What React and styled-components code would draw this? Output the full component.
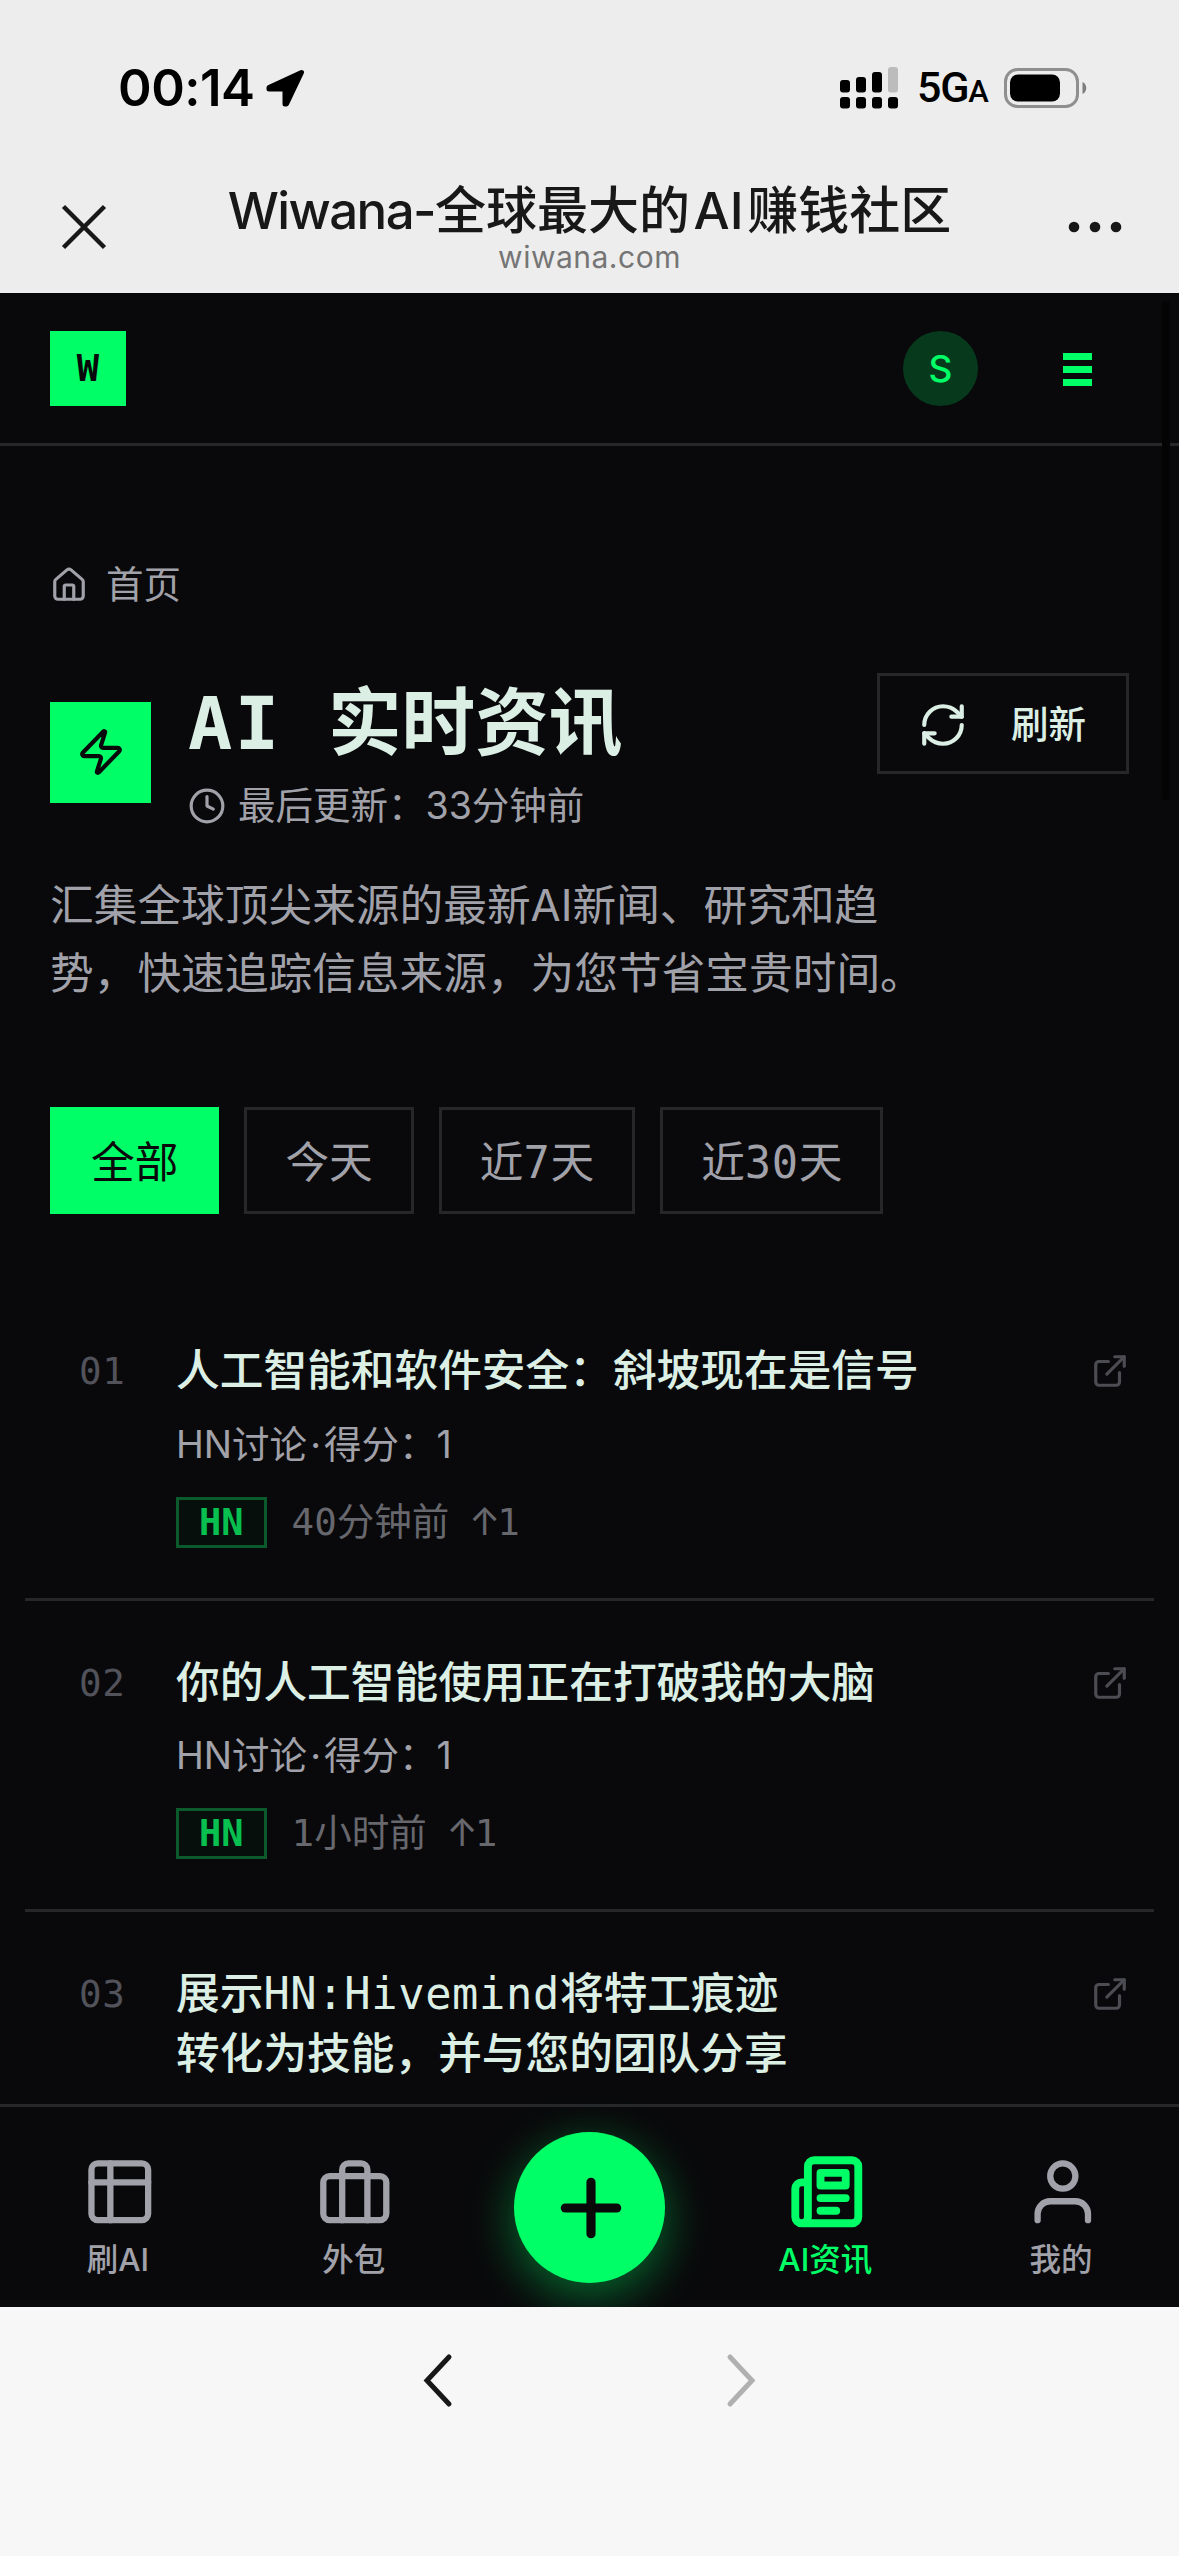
import React from "react";
import styled, { createGlobalStyle } from "styled-components";
import { House, Zap, Clock, RefreshCw, ExternalLink, Plus } from "lucide-react";

const sans = `Inter, "Noto Sans CJK SC", sans-serif`;
const mono = `"DejaVu Sans Mono", "Noto Sans CJK SC", monospace`;
const green = "#00ff66";
const line = "#27272a";
const muted = "#a1a1aa";

const GlobalStyle = createGlobalStyle`
  * {
    box-sizing: border-box;
  }
  body {
    margin: 0;
    background: #f7f7f7;
    font-family: ${sans};
  }
  svg {
    display: block;
    flex-shrink: 0;
  }
`;

const Screen = styled.div`
  width: 1179px;
  height: 2556px;
  display: flex;
  flex-direction: column;
  overflow: hidden;
  background: #f7f7f7;
`;

/* ---------- phone chrome ---------- */

const Chrome = styled.div`
  height: 293px;
  background: #ededed;
  color: #181818;
`;

const StatusBar = styled.div`
  height: 176px;
  padding: 0 92px 0 118px;
  display: flex;
  align-items: center;
  justify-content: space-between;
  color: #000;
`;

const StatusGroup = styled.div`
  display: flex;
  align-items: center;
`;

const Time = styled.div`
  width: 146px;
  font-size: 51px;
  font-weight: 600;
  line-height: 60px;
  letter-spacing: -0.5px;
`;

const Network = styled.div`
  width: 106px;
  padding: 3px 0 0 19px;
  font-family: Roboto, sans-serif;
  font-size: 43px;
  font-weight: 500;
  line-height: 50px;
  letter-spacing: -1.3px;
  white-space: nowrap;

  small {
    font-size: 31px;
  }
`;

const TitleBar = styled.div`
  height: 102px;
  padding: 0 57px;
  display: flex;
  align-items: center;
  justify-content: space-between;
`;

const PageName = styled.div`
  display: flex;
  flex-direction: column;
  align-items: center;
  white-space: nowrap;
`;

const PageTitle = styled.div`
  font-size: 51px;
  font-weight: 500;
  line-height: 62px;
  word-spacing: -10px;

  span {
    letter-spacing: -1.6px;
  }
`;

const PageHost = styled.div`
  margin-top: -2px;
  font-size: 30px;
  line-height: 34px;
  letter-spacing: 0.5px;
  color: #757575;
`;

const BrowserBar = styled.div`
  height: 249px;
  padding: 42px 418px 0;
  display: flex;
  justify-content: space-between;
  align-items: flex-start;
`;

/* ---------- web page ---------- */

const Page = styled.div`
  position: relative;
  height: 2014px;
  display: flex;
  flex-direction: column;
  overflow: hidden;
  background: #09090b;
  color: #dcefe5;
`;

const ScrollThumb = styled.div`
  position: absolute;
  top: 8px;
  right: 9px;
  width: 8px;
  height: 499px;
  border-radius: 4px;
  background: #040405;
`;

const Header = styled.header`
  height: 153px;
  flex-shrink: 0;
  padding: 0 87px 0 50px;
  display: flex;
  align-items: center;
  border-bottom: 3px solid ${line};
`;

const Logo = styled.div`
  width: 76px;
  height: 75px;
  margin-right: auto;
  background: ${green};
  color: #09090b;
  font: bold 37px/75px ${mono};
  text-align: center;
`;

const Avatar = styled.div`
  width: 75px;
  height: 75px;
  margin-right: 85px;
  border-radius: 50%;
  background: #07391d;
  color: ${green};
  font-size: 37px;
  font-weight: 500;
  line-height: 75px;
  text-align: center;
`;

const Burger = styled.div`
  display: flex;
  flex-direction: column;
  gap: 6px;
  padding-top: 3px;

  span {
    width: 29px;
    height: 7px;
    background: ${green};
  }
`;

const Main = styled.main`
  flex: 1;
  min-height: 0;
  overflow: hidden;
  padding: 112px 50px 0;
`;

const Breadcrumb = styled.div`
  display: flex;
  align-items: center;
  gap: 18px;
  margin-bottom: 61px;
  color: ${muted};
  font-size: 37.5px;
  line-height: 54px;
`;

const Hero = styled.div`
  display: flex;
  justify-content: space-between;
  align-items: flex-start;
`;

const HeroLeft = styled.div`
  display: flex;
  align-items: center;
  gap: 37px;
`;

const HeroIcon = styled.div`
  width: 101px;
  height: 101px;
  margin-top: -2px;
  display: flex;
  align-items: center;
  justify-content: center;
  background: ${green};
  color: #09090b;
`;

const Heading = styled.h1`
  margin: 0;
  padding: 2px 0 7px;
  font: bold 73.6px/97px ${mono};
  white-space: nowrap;
`;

/* latin glyphs sit slightly wider than the CJK run around them */
const Latin = styled.span`
  letter-spacing: ${(props) => props.$track || "0.015em"};
`;

const Updated = styled.div`
  display: flex;
  align-items: center;
  gap: 12px;
  color: ${muted};
  font-size: 37.5px;
  line-height: 54px;
`;

const RefreshButton = styled.button`
  width: 252px;
  height: 101px;
  padding: 2px 40px 0 38px;
  display: flex;
  align-items: center;
  justify-content: space-between;
  border: 3px solid ${line};
  background: transparent;
  color: #dcefe5;
  font: 500 37.5px/54px ${sans};
`;

const Intro = styled.p`
  max-width: 900px;
  margin: 0;
  padding: 38.5px 0 98.5px;
  color: ${muted};
  font-size: 43.7px;
  line-height: 68.7px;
`;

const Filters = styled.div`
  display: flex;
  gap: 25px;
  margin-bottom: 75px;
`;

const Filter = styled.button`
  height: 107px;
  padding: 4px 38px 0;
  border: 3px solid ${(props) => (props.$active ? green : line)};
  background: ${(props) => (props.$active ? green : "transparent")};
  color: ${(props) => (props.$active ? "#09090b" : muted)};
  font: 43.7px/60px ${mono};
`;

const List = styled.div`
  margin: 0 -25px;
`;

const Item = styled.article`
  display: flex;
  align-items: flex-start;
  padding: 52px 25px 50px 54px;
  border-bottom: 3px solid ${line};
`;

const Index = styled.div`
  width: 97px;
  color: #52525b;
  font: 37.5px/60px ${mono};
  letter-spacing: 0.6px;
`;

const ItemBody = styled.div`
  flex: 1;
`;

const ItemTitle = styled.h2`
  width: 780px;
  margin: 0 0 12px;
  font: 500 43.7px/60.3px ${mono};
`;

const ItemText = styled.div`
  margin-bottom: 22px;
  color: ${muted};
  font-size: 37.5px;
  line-height: 61px;
`;

const Dot = styled.span`
  padding: 0 3px;
`;

const Meta = styled.div`
  display: flex;
  align-items: center;
  gap: 25px;
  color: #67676e;
  font: 37.5px/51px ${mono};
`;

const Votes = styled.span`
  display: flex;

  i {
    width: 25px;
    margin-left: -2px;
    font: 37.5px/49px Inter, sans-serif;
    display: flex;
    justify-content: center;
  }
`;

const Badge = styled.span`
  height: 51px;
  padding: 0 20px;
  border: 3px solid #0b5a2b;
  background: #060f0b;
  color: #08c050;
  font: bold 37px/45px ${mono};
`;

const OpenIcon = styled(ExternalLink)`
  margin-top: 11px;
  color: #4c4c53;
`;

const TabBar = styled.nav`
  height: 203px;
  flex-shrink: 0;
  display: grid;
  grid-template-columns: repeat(5, 1fr);
  border-top: 3px solid ${line};
  background: #09090b;
`;

const Tab = styled.div`
  display: flex;
  flex-direction: column;
  align-items: center;
  gap: 9px;
  padding-top: 47px;
  color: ${(props) => (props.$active ? green : muted)};
  font-size: 31.5px;
  font-weight: 500;
  line-height: 42px;

  svg {
    margin-left: 3px;
  }
`;

const AddButton = styled.div`
  width: 151px;
  height: 151px;
  margin: 25px 0 0 1px;
  padding-left: 2px;
  justify-self: center;
  display: flex;
  align-items: center;
  justify-content: center;
  border-radius: 50%;
  background: ${green};
  color: #09090b;
  box-shadow: 0 13px 47px rgba(0, 255, 102, 0.4);
`;

const LocationArrow = () => (
  <svg width="42" height="42" viewBox="0 0 42 42">
    <path d="M37.500 5.500 5 20.500v1.500h16v15h1.500z" fill="#000" stroke="#000" strokeWidth="5" strokeLinejoin="round" />
  </svg>
);

const Signal = () => (
  <svg width="58" height="42" viewBox="0 0 58 42">
    <rect x="0" y="13" width="10" height="12.500" rx="3" />
    <rect x="16" y="10" width="10" height="15.500" rx="3" />
    <rect x="32" y="5" width="10" height="20.500" rx="3" />
    <rect x="48" y="0" width="10" height="25.500" rx="3" fill="#bcbcbc" />
    {[0, 16, 32, 48].map((x) => (
      <rect key={x} x={x} y="30" width="10" height="11.500" rx="3" />
    ))}
  </svg>
);

const Battery = () => (
  <svg width="83" height="40" viewBox="0 0 83 40">
    <rect x="1.500" y="1.500" width="72" height="37" rx="12" fill="none" stroke="#8f8f8f" strokeWidth="3" />
    <rect x="6" y="6.500" width="50" height="27" rx="8" />
    <path d="M78.500 14c5 2 5 10 0 12z" fill="#7d7d7d" />
  </svg>
);

const TabIcon = ({ children }) => (
  <svg
    width="75.600"
    height="75.600"
    viewBox="0 0 24 24"
    fill="none"
    stroke="currentColor"
    strokeWidth="2"
    strokeLinecap="round"
    strokeLinejoin="round"
  >
    {children}
  </svg>
);

const filters = [
  { key: "all", label: "全部", active: true },
  { key: "today", label: "今天" },
  { key: "7", label: <>近<Latin>7</Latin>天</> },
  { key: "30", label: <>近<Latin>30</Latin>天</> },
];

const news = [
  { no: "01", title: "人工智能和软件安全：斜坡现在是信号", time: "40分钟前" },
  { no: "02", title: "你的人工智能使用正在打破我的大脑", time: "1小时前" },
  {
    no: "03",
    title: (
      <>
        展示<Latin>HN:Hivemind</Latin>将特工痕迹
        <br />
        转化为技能，并与您的团队分享
      </>
    ),
  },
];

const NewsItem = ({ no, title, time }) => (
  <Item>
    <Index>{no}</Index>
    <ItemBody>
      <ItemTitle>{title}</ItemTitle>
      {time && (
        <>
          <ItemText>
            HN讨论<Dot>·</Dot>得分：1
          </ItemText>
          <Meta>
            <Badge>HN</Badge>
            <span>{time}</span>
            <Votes>
              <i>↑</i>1
            </Votes>
          </Meta>
        </>
      )}
    </ItemBody>
    <OpenIcon size={38} />
  </Item>
);

const App = () => (
  <>
    <GlobalStyle />
    <Screen>
      <Chrome>
        <StatusBar>
          <StatusGroup>
            <Time>00:14</Time>
            <LocationArrow />
          </StatusGroup>
          <StatusGroup>
            <Signal />
            <Network>
              5G<small>A</small>
            </Network>
            <Battery />
          </StatusGroup>
        </StatusBar>
        <TitleBar>
          <svg width="54" height="54" viewBox="0 0 54 54" stroke="#181818" strokeWidth="4.500">
            <path d="M6.500 6.500l41 41M47.500 6.500l-41 41" />
          </svg>
          <PageName>
            <PageTitle>
              <span>Wiwana-</span>全球最大的 AI 赚钱社区
            </PageTitle>
            <PageHost>wiwana.com</PageHost>
          </PageName>
          <svg width="54" height="12" viewBox="0 0 54 12" fill="#181818">
            <circle cx="6" cy="6" r="5.300" />
            <circle cx="27" cy="6" r="5.300" />
            <circle cx="48" cy="6" r="5.300" />
          </svg>
        </TitleBar>
      </Chrome>

      <Page>
        <Header>
          <Logo>W</Logo>
          <Avatar>S</Avatar>
          <Burger>
            <span />
            <span />
            <span />
          </Burger>
        </Header>

        <Main>
          <Breadcrumb>
            <House size={38} />
            <span>首页</span>
          </Breadcrumb>

          <Hero>
            <HeroLeft>
              <HeroIcon>
                <Zap size={50} />
              </HeroIcon>
              <div>
                <Heading>
                  <Latin $track="0.032em">AI </Latin>实时资讯
                </Heading>
                <Updated>
                  <Clock size={38} />
                  <span>最后更新：33分钟前</span>
                </Updated>
              </div>
            </HeroLeft>
            <RefreshButton>
              <RefreshCw size={50} />
              <span>刷新</span>
            </RefreshButton>
          </Hero>

          <Intro>汇集全球顶尖来源的最新AI新闻、研究和趋势，快速追踪信息来源，为您节省宝贵时间。</Intro>

          <Filters>
            {filters.map((f) => (
              <Filter key={f.key} $active={f.active}>
                {f.label}
              </Filter>
            ))}
          </Filters>

          <List>
            {news.map((item) => (
              <NewsItem key={item.no} {...item} />
            ))}
          </List>
        </Main>

        <TabBar>
          <Tab>
            <TabIcon>
              <rect x="3" y="3" width="18" height="18" rx="2" />
              <path d="M3 9h18M9 3v18" />
            </TabIcon>
            刷AI
          </Tab>
          <Tab>
            <TabIcon>
              <rect x="2" y="7" width="20" height="14" rx="2" />
              <path d="M16 21V5a2 2 0 0 0-2-2h-4a2 2 0 0 0-2 2v16" />
            </TabIcon>
            外包
          </Tab>
          <AddButton>
            <Plus size={88} strokeWidth={2.5} />
          </AddButton>
          <Tab $active>
            <TabIcon>
              <g strokeWidth="2.500">
                <path d="M4 22h16a2 2 0 0 0 2-2V4a2 2 0 0 0-2-2H8a2 2 0 0 0-2 2v16a2 2 0 0 1-2 2Zm0 0a2 2 0 0 1-2-2v-9c0-1.100.9-2 2-2h2" />
                <path d="M18 14h-8M15 18h-5M10 6h8v4h-8V6Z" />
              </g>
            </TabIcon>
            AI资讯
          </Tab>
          <Tab>
            <TabIcon>
              <path d="M20 21v-2a4 4 0 0 0-4-4H8a4 4 0 0 0-4 4v2" />
              <circle cx="12" cy="7" r="4" />
            </TabIcon>
            我的
          </Tab>
        </TabBar>
        <ScrollThumb />
      </Page>

      <BrowserBar>
        <svg width="40" height="62" viewBox="0 0 40 62" fill="none" stroke="#181818" strokeWidth="5" strokeLinecap="round">
          <path d="M31 8 9 31.500l22 23.500" />
        </svg>
        <svg width="40" height="62" viewBox="0 0 40 62" fill="none" stroke="#b0b0b0" strokeWidth="5" strokeLinecap="round">
          <path d="M9 8l22 23.500L9 55" />
        </svg>
      </BrowserBar>
    </Screen>
  </>
);

export default App;
